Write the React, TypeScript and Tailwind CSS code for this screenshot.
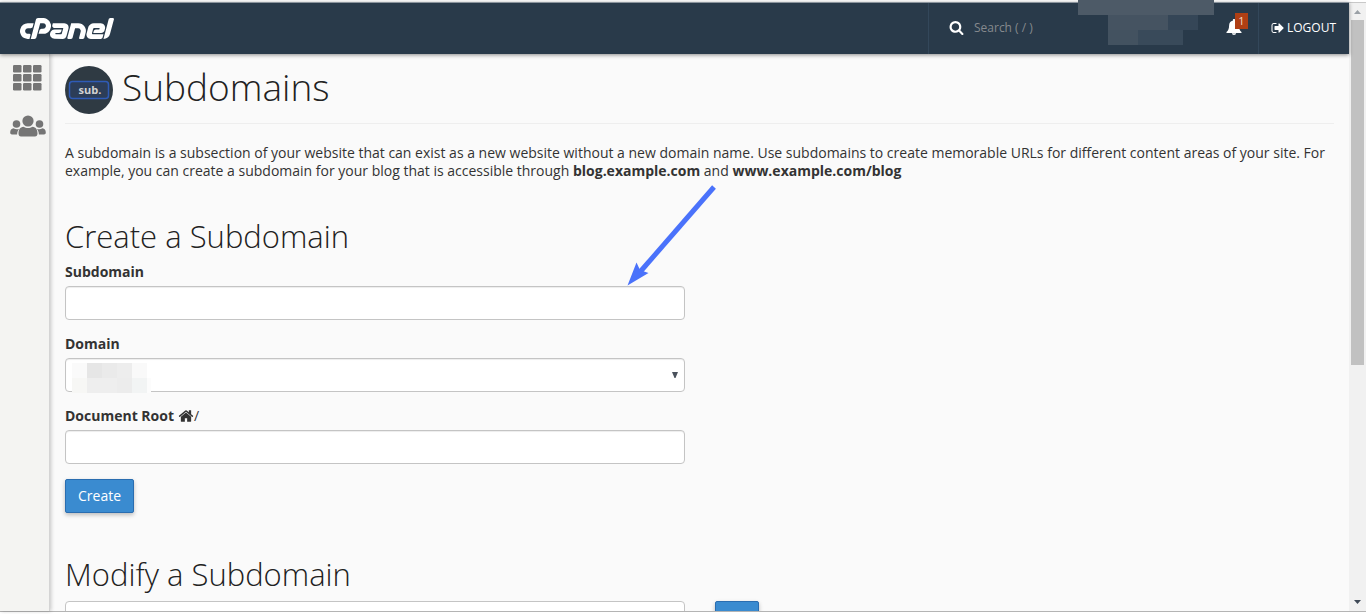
import type { ReactNode } from "react";
import { SiCpanel } from "react-icons/si";

function Glyph({ d, className }: { d: string; className: string }) {
  return (
    <svg viewBox="0 0 1792 1792" fill="currentColor" aria-hidden="true" className={className}>
      <path d={d} />
    </svg>
  );
}

const SEARCH =
  "M1216 832q0-185-131.5-316.5t-316.5-131.5-316.5 131.5-131.5 316.5 131.5 316.5 316.5 131.5 316.5-131.5 131.5-316.5zm512 832q0 52-38 90t-90 38q-54 0-90-38l-343-342q-179 124-399 124-143 0-273.5-55.5t-225-150-150-225-55.5-273.5 55.5-273.5 150-225 225-150 273.5-55.5 273.5 55.5 225 150 150 225 55.5 273.5q0 220-124 399l343 343q37 37 37 90z";
const SIGN_OUT =
  "M704 1440q0 4 1 20t.5 26.5-3 23.5-10 19.5-20.5 6.5h-320q-119 0-203.5-84.5t-84.5-203.5v-704q0-119 84.5-203.5t203.5-84.5h320q13 0 22.5 9.5t9.5 22.5q0 4 1 20t.5 26.5-3 23.5-10 19.5-20.5 6.5h-320q-66 0-113 47t-47 113v704q0 66 47 113t113 47h312l11.5 1 11.5 3 8 5.5 7 9 2 13.5zm928-544q0 26-19 45l-544 544q-19 19-45 19t-45-19-19-45v-288h-448q-26 0-45-19t-19-45v-384q0-26 19-45t45-19h448v-288q0-26 19-45t45-19 45 19l544 544q19 19 19 45z";
const HOME =
  "M1472 992v480q0 26-19 45t-45 19h-384v-384h-256v384h-384q-26 0-45-19t-19-45v-480q0-1 .5-3t.5-3l575-474 575 474q1 2 1 6zm223-69l-62 74q-8 9-21 11h-3q-13 0-21-7l-692-577-692 577q-12 8-24 7-13-2-21-11l-62-74q-8-10-7-23.5t11-21.5l719-599q32-26 76-26t76 26l244 204v-195q0-14 9-23t23-9h192q14 0 23 9t9 23v408l219 182q10 8 11 21.5t-7 23.5z";

function Header() {
  return (
    <header className="relative z-10 flex h-[52px] shrink-0 items-stretch border-t border-[#8b949d] bg-[#293a4a] text-white shadow-[0_1px_4px_rgba(0,0,0,0.45)]">
      <a href="#home" aria-label="cPanel" className="flex items-center pl-5">
        <SiCpanel viewBox="0 9.35 24 5.3" className="h-[21px] w-[94px]" />
      </a>
      <label className="ml-auto flex w-[150px] items-center border-l border-[#33475a] pb-0.5 pl-5">
        <Glyph d={SEARCH} className="h-[15px] w-[15px]" />
        <input
          aria-label="Search"
          placeholder="Search ( / )"
          className="ml-2.5 w-20 bg-transparent text-xs outline-none placeholder:text-[#85898d]"
        />
      </label>
      <button type="button" aria-label="Account" className="relative flex w-[136px] flex-col items-start pl-[30px] pt-3">
        <span className="absolute -top-[3px] left-0 h-[15px] w-full bg-[#4d5a67]" />
        <span className="flex h-[15px]">
          <span className="w-[60px] bg-[#455361]" />
          <span className="w-[30px] bg-[#354657]" />
        </span>
        <span className="flex h-[15px]">
          <span className="w-[30px] bg-[#435260]" />
          <span className="w-[45px] bg-[#394a5a]" />
        </span>
      </button>
      <button type="button" aria-label="Notifications" className="relative w-[45px] border-r border-[#33475a]">
        <svg viewBox="0 0 16 16" fill="currentColor" className="absolute left-3 top-4 h-4 w-4">
          <path d="M8 0c.7 0 1.2.5 1.2 1.2v.6c2.3.5 3.7 2.2 3.7 4.7 0 3.5 1 5.2 2.6 6.500v.9H.5V13c1.600-1.300 2.600-3 2.600-6.500 0-2.500 1.400-4.200 3.700-4.700v-.6C6.800.5 7.300 0 8 0zM5.900 14.300h4.200C10 15.400 9.200 16 8 16s-2-.6-2.100-1.700z" />
        </svg>
        <span className="absolute left-[21px] top-2.5 h-4 w-[13px] bg-[#b03f14] text-center text-[11px] leading-4 text-[#f0d9c8]">
          1
        </span>
      </button>
      <a href="#logout" className="flex items-center pb-0.5 pl-3 pr-[13px] text-xs">
        <Glyph d={SIGN_OUT} className="mr-0.5 h-3.5 w-3.5" />
        LOGOUT
      </a>
    </header>
  );
}

function Sidebar() {
  return (
    <nav className="relative z-[1] flex w-[50px] shrink-0 flex-col items-center border-r border-[#d4d4d4] bg-[#f4f4f2] pl-1.5 pt-[11px] text-[#757575] shadow-[1px_0_4px_rgba(0,0,0,0.22)]">
      <a href="#tools" aria-label="Tools">
        <svg viewBox="0 0 29 26" fill="currentColor" className="h-[26px] w-[29px]">
          {[0, 9, 18].map((y) =>
            [0, 10, 20].map((x) => <rect key={`${x}-${y}`} x={x} y={y} width="8.5" height="7.5" rx="1.2" />),
          )}
        </svg>
      </a>
      <a href="#users" aria-label="User manager" className="mt-6">
        <svg viewBox="0 0 36 22" fill="currentColor" className="h-[22px] w-9">
          <circle cx="18" cy="6" r="5.6" />
          <path d="M13.5 11.7c2.6 1.8 6.4 1.8 9 0 3.4.4 5 3 5 6.8 0 2-1 3-2.5 3H11c-1.5 0-2.5-1-2.5-3 0-3.8 1.6-6.4 5-6.8z" />
          <circle cx="6.5" cy="9" r="3.8" />
          <circle cx="29.5" cy="9" r="3.8" />
          <path d="M3.5 13.3c1.9 1.2 4.1 1.2 5.7.4-1.3 1.5-2 3.2-2.1 5.8H2c-1.3 0-1.8-.7-1.8-2 0-2.3 1.3-4 3.3-4.2zM32.5 13.3c-1.9 1.2-4.1 1.2-5.7.4 1.3 1.5 2 3.2 2.1 5.8H34c1.3 0 1.8-.7 1.8-2 0-2.3-1.3-4-3.3-4.2z" />
        </svg>
      </a>
    </nav>
  );
}

const field =
  "block h-[34px] w-full appearance-none rounded border border-[#c4c4c4] bg-white px-3 text-sm shadow-[inset_0_1px_1px_rgba(0,0,0,0.075)]";

function Field({ id, label, children }: { id: string; label: ReactNode; children: ReactNode }) {
  return (
    <div className="mb-[15px] w-full max-w-[620px]">
      <label htmlFor={id} className="mb-[5px] flex h-[18px] items-center text-sm font-bold leading-[18px]">
        {label}
      </label>
      {children}
    </div>
  );
}

function Scrollbar() {
  return (
    <div aria-hidden="true" className="flex w-[17px] shrink-0 flex-col items-center border-t border-[#c8c8c8] bg-[#f1f1f1]">
      <svg viewBox="0 0 17 17" className="h-[17px] w-[17px] shrink-0">
        <path d="M5 11L8.5 7L12 11z" fill="#9aa0a6" />
      </svg>
      <div className="h-[345px] w-[13px] bg-[#c1c1c1]" />
      <svg viewBox="0 0 17 17" className="mt-auto h-[17px] w-[17px] shrink-0">
        <path d="M5 6H12L8.5 10z" fill="#3f4a57" />
      </svg>
    </div>
  );
}

export default function App() {
  return (
    <div className="flex h-screen flex-col overflow-hidden bg-white pb-0.5 pt-0.5 font-['Open_Sans',sans-serif] text-[#333]">
      <div className="flex min-h-0 flex-1 border-b border-[#b4b4b4]">
        <div className="flex min-w-0 flex-1 flex-col">
          <Header />
          <div className="flex min-h-0 flex-1">
            <Sidebar />
            <main className="relative min-w-0 flex-1 overflow-hidden bg-[#fafafa] px-[15px] pt-3">
              <div className="flex h-[58px] items-start gap-[9px] border-b border-[#eee]">
                <svg viewBox="0 0 48 48" className="h-12 w-12 shrink-0" aria-hidden="true">
                  <circle cx="24" cy="24" r="24" fill="#2f3a43" />
                  <rect x="4.5" y="15.5" width="39" height="17" rx="3" fill="#2c3d58" stroke="#2f5bb7" strokeWidth="1.5" />
                  <text x="25" y="28" textAnchor="middle" fontSize="11" fontWeight="700" fill="#d2d2d2">
                    sub.
                  </text>
                </svg>
                <h1 className="text-[37px] font-light leading-[42px] text-[#222]">Subdomains</h1>
              </div>
              <p className="mt-5 text-sm leading-[18px]">
                A subdomain is a subsection of your website that can exist as a new website without a new domain name. Use
                subdomains to create memorable URLs for different content areas of your site. For example, you can create a
                subdomain for your blog that is accessible through <b>blog.example.com</b> and <b>www.example.com/blog</b>
              </p>

              <h2 className="mb-2.5 mt-[39px] text-[31px] font-light leading-[34px] text-[#222]">Create a Subdomain</h2>
              <form>
                <Field id="subdomain" label="Subdomain">
                  <input id="subdomain" className={field} />
                </Field>
                <Field id="domain" label="Domain">
                  <div className="relative">
                    <select id="domain" className={field}>
                      <option />
                    </select>
                    <span className="pointer-events-none absolute left-[7px] top-[5px] grid h-[30px] w-[79px] grid-cols-[15px_15px_15px_15px_15px_4px] grid-rows-2">
                      <i className="bg-[#fafafa]" />
                      <i className="bg-[#e6e6e6]" />
                      <i className="bg-[#eaeaea]" />
                      <i className="bg-[#ededed]" />
                      <i className="bg-[#f9f9f9]" />
                      <i className="bg-white" />
                      <i className="bg-[#f7f7f5]" />
                      <i className="bg-[#eeeeee]" />
                      <i className="bg-[#eeeeee]" />
                      <i className="bg-[#ececec]" />
                      <i className="bg-[#f2f4f4]" />
                      <i className="bg-[#fcfcfc]" />
                    </span>
                    <svg viewBox="0 0 6 6" className="pointer-events-none absolute right-[7px] top-[14px] h-1.5 w-1.5">
                      <path d="M0 0H6L3.5 6H2.5z" fill="#4a525c" />
                    </svg>
                  </div>
                </Field>
                <Field
                  id="root"
                  label={
                    <>
                      Document Root
                      <Glyph d={HOME} className="ml-1 h-4 w-4" />
                      <span className="font-normal">/</span>
                    </>
                  }
                >
                  <input id="root" className={field} />
                </Field>
                <button
                  type="button"
                  className="block h-[34px] rounded-xs border border-[#2a6db0] bg-[#3a8bd0] px-3 text-sm text-white shadow-[0_2px_4px_rgba(0,0,0,0.25)]"
                >
                  Create
                </button>
              </form>

              <h2 className="mb-2.5 mt-11 text-[31px] font-light leading-[34px] text-[#222]">Modify a Subdomain</h2>
              <form className="flex gap-[30px]">
                <input aria-label="Search subdomains" className="block h-[34px] w-full max-w-[620px] rounded border border-[#c4c4c4] bg-white px-3" />
                <button
                  type="button"
                  aria-label="Go"
                  className="h-[34px] w-11 shrink-0 rounded-xs border border-[#2a6db0] bg-[#3a8bd0] shadow-[0_2px_4px_rgba(0,0,0,0.25)]"
                />
              </form>

              <svg viewBox="0 0 90 104" className="pointer-events-none absolute left-[576px] top-[130px] h-[104px] w-[90px]" aria-hidden="true">
                <path d="M88 3L14 88" stroke="#4a72fb" strokeWidth="5" />
                <path d="M1.5 101.5L10.5 78.5L14 86L22.5 89z" fill="#4a72fb" />
              </svg>
            </main>
          </div>
        </div>
        <Scrollbar />
      </div>
    </div>
  );
}
